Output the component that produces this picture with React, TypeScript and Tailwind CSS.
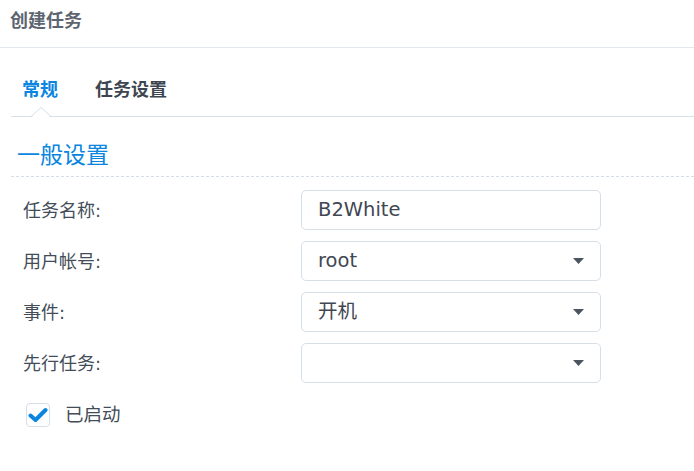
const cjk = "font-['DejaVu_Sans','Noto_Sans_CJK_SC',sans-serif]";

type FieldProps = {
  label: string;
  value?: string;
  select?: boolean;
};

const Caret = () => (
  <svg width="11" height="6" viewBox="0 0 11 6" className="shrink-0">
    <path d="M0 0h11L5.5 6z" fill="#4b5560" />
  </svg>
);

const Field = ({ label, value, select }: FieldProps) => {
  return (
    <div className="flex items-center h-10">
      <div className="w-[290px] pl-3 text-[18px] text-[#434d58]">{label}</div>
      <div className="w-[300px] h-10 flex items-center justify-between pl-4 pr-4 border border-[#d6dfe8] rounded-[5px] bg-white text-[19.5px] text-[#3f4852]">
        <span>{value}</span>
        {select && <Caret />}
      </div>
    </div>
  );
};

export default function App() {
  return (
    <div className={`w-[694px] h-[471px] bg-white ${cjk}`}>
      <div className="h-[48px] pt-[7px] pl-[10px] border-b border-[#e3e8ee]">
        <span className="text-[18px] leading-[27px] font-bold text-[#5d6570]">创建任务</span>
      </div>

      <div className="pl-[11px]">
        <div className="relative h-[69px] flex items-end pb-[13px] border-b border-[#d5e0ea] gap-[37px] pl-[11px]">
          <span className="text-[18px] leading-[27px] font-bold text-[#0b86e0]">常规</span>
          <span className="text-[18px] leading-[27px] font-bold text-[#3d4650]">任务设置</span>
          <svg
            width="20"
            height="10"
            viewBox="0 0 20 10"
            className="absolute left-[20px] bottom-[-1px]"
          >
            <path d="M0 9.5L10 0.5L20 9.5" fill="white" stroke="#d5e0ea" />
            <rect x="0" y="9" width="20" height="1" fill="white" />
            <rect x="0" y="9" width="1.5" height="1" fill="#d5e0ea" />
            <rect x="18.5" y="9" width="1.5" height="1" fill="#d5e0ea" />
          </svg>
        </div>

        <div className="pt-[23px] pl-[6px] pb-[6px] border-b border-dashed border-[#d5dee8]">
          <span className="block text-[23px] leading-[30px] text-[#0b86e0]">一般设置</span>
        </div>

        <div className="pt-[13px] flex flex-col gap-[11px]">
          <Field label="任务名称:" value="B2White" />
          <Field label="用户帐号:" value="root" select />
          <Field label="事件:" value="开机" select />
          <Field label="先行任务:" select />
        </div>

        <div className="flex items-center pt-[18px] pl-[15px] gap-[15px]">
          <div className="w-6 h-6 rounded-[4px] border border-[#d6dfe8] flex items-center justify-center">
            <svg width="20" height="16" viewBox="0 0 20 16">
              <path
                d="M2.5 8.5L7.5 13L17.5 3"
                fill="none"
                stroke="#0b86e0"
                strokeWidth="4"
                strokeLinecap="round"
                strokeLinejoin="round"
              />
            </svg>
          </div>
          <span className="text-[18.5px] text-[#434d58]">已启动</span>
        </div>
      </div>
    </div>
  );
}
